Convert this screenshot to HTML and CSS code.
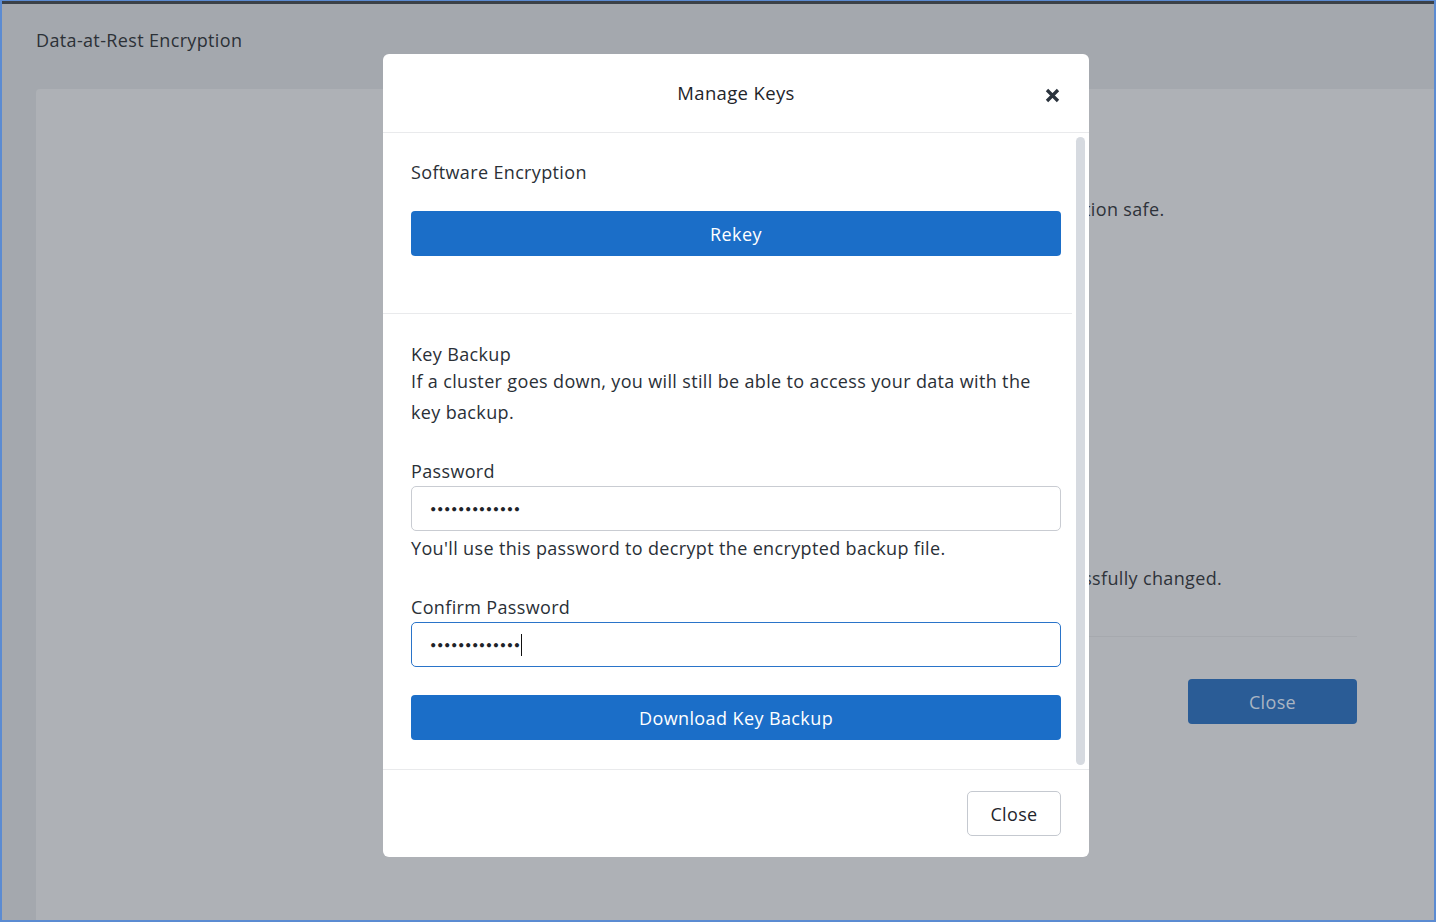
FILE: index.html
```html
<!DOCTYPE html>
<html>
<head>
  <title>Data-at-Rest Encryption</title>
  <link rel="stylesheet" href="styles.css">
</head>
<body>
  <div class="frame">
    <div class="top-line"></div>

    <!-- Page behind the dialog -->
    <div class="page">
      <h1 class="page-title">Data-at-Rest Encryption</h1>
      <div class="panel">
        <div class="panel-body">
          <p class="panel-text first">Rekeying replaces the current encryption key to keep your information safe.</p>
          <p class="panel-text second">The encryption key of this cluster has been successfully changed.</p>
          <div class="panel-footer">
            <button class="page-close">Close</button>
          </div>
        </div>
      </div>
    </div>

    <!-- Manage Keys dialog -->
    <div class="modal">
      <div class="modal-header">
        <span class="modal-title">Manage Keys</span>
        <a href="#" class="modal-x">
          <svg width="15" height="15" viewBox="0 0 15 15">
            <path d="M2 2 L13 13 M13 2 L2 13" stroke="#2b333d" stroke-width="3.3" fill="none"/>
          </svg>
        </a>
      </div>

      <div class="modal-body">
        <div class="modal-scroll">
          <div class="section">
            <div class="section-title">Software Encryption</div>
            <button class="button">Rekey</button>
          </div>

          <div class="section backup">
            <div class="section-title">Key Backup</div>
            <div class="description">If a cluster goes down, you will still be able to access your data with the key backup.</div>

            <label class="label">Password</label>
            <div class="field"><span class="dots">•••••••••••••</span></div>
            <div class="help">You'll use this password to decrypt the encrypted backup file.</div>

            <label class="label confirm">Confirm Password</label>
            <div class="field focused"><span class="dots">•••••••••••••</span><span class="caret"></span></div>

            <button class="button download">Download Key Backup</button>
          </div>
        </div>
        <div class="scrollbar"><div class="thumb"></div></div>
      </div>

      <div class="modal-footer">
        <button class="close-btn">Close</button>
      </div>
    </div>
  </div>
</body>
</html>
```

FILE: styles.css
```css
body {
  margin: 0;
  padding: 0;
  font-family: "Open Sans", Lato, sans-serif;
  letter-spacing: 0.35px;
  color: #2a3037;
}

.frame {
  position: relative;
  width: 1436px;
  height: 922px;
  box-sizing: border-box;
  border: 2px solid #5b8bd2;
  border-top-width: 1px;
  background-color: #a4a8ae;
  overflow: hidden;
  display: flex;
  flex-direction: column;
}

.top-line {
  height: 3px;
  background-color: #3b4148;
}

.page {
  flex: 1;
  display: flex;
  flex-direction: column;
}

.page-title {
  margin: 0;
  padding: 24px 0 0 34px;
  height: 85px;
  box-sizing: border-box;
  font-size: 18px;
  font-weight: normal;
  line-height: 24px;
  color: #2c3137;
}

.panel {
  flex: 1;
  margin-left: 34px;
  background-color: #aeb1b6;
  border-top-left-radius: 4px;
}

.panel-body {
  margin-left: 424px;
  width: 897px;
  padding-top: 108px;
}

.panel-text {
  margin: 0;
  font-size: 18px;
  line-height: 24px;
  color: #2e333a;
  white-space: nowrap;
}

.panel-text.first {
  padding-left: 43px;
}

.panel-text.second {
  margin-top: 345px;
  padding-left: 196px;
}

.panel-footer {
  margin-top: 46px;
  border-top: 1px solid #a6a9ae;
  padding-top: 42px;
  display: flex;
  justify-content: flex-end;
}

.page-close {
  width: 169px;
  height: 45px;
  border: none;
  border-radius: 4px;
  background-color: #2a5c96;
  color: #a9b5c3;
  font-family: "Open Sans", sans-serif;
  font-size: 18px;
  letter-spacing: 0.35px;
}

/* dialog */
.modal {
  position: absolute;
  left: 381px;
  top: 53px;
  width: 706px;
  height: 803px;
  background-color: #fff;
  border-radius: 6px;
  display: flex;
  flex-direction: column;
}

.modal-header {
  position: relative;
  height: 77px;
  padding-bottom: 1px;
  border-bottom: 1px solid #e9eaec;
  display: flex;
  justify-content: center;
  align-items: center;
}

.modal-title {
  font-size: 18.5px;
  color: #1f252b;
}

.modal-x {
  position: absolute;
  right: 29px;
  top: 34px;
  line-height: 0;
}

.modal-body {
  height: 636px;
  display: flex;
  border-bottom: 1px solid #e9eaec;
}

.modal-scroll {
  flex: 1;
}

.scrollbar {
  width: 17px;
  padding: 4px 0;
  box-sizing: border-box;
}

.thumb {
  width: 9px;
  height: 100%;
  margin-left: 4px;
  background-color: #d6dae0;
  border-radius: 5px;
}

.section {
  padding: 27px 11px 57px 28px;
}

.section.backup {
  border-top: 1px solid #e9eaec;
  padding-top: 28px;
  padding-bottom: 28px;
}

.section-title {
  font-size: 18px;
  line-height: 24px;
  margin-bottom: 27px;
}

.section.backup .section-title {
  margin-bottom: 0;
}

.description {
  font-size: 18px;
  line-height: 31px;
  margin-bottom: 31px;
}

.button {
  display: block;
  width: 100%;
  height: 45px;
  border: none;
  border-radius: 4px;
  background-color: #1b6ec8;
  color: #fff;
  font-family: "Open Sans", sans-serif;
  font-size: 18px;
  letter-spacing: 0.4px;
  cursor: pointer;
}

.label {
  display: block;
  font-size: 18px;
  line-height: 24px;
  margin-bottom: 3px;
}

.label.confirm {
  margin-top: 35px;
}

.field {
  height: 45px;
  box-sizing: border-box;
  border: 1px solid #c9ccd2;
  border-radius: 5px;
  padding: 0 18px;
  display: flex;
  align-items: center;
}

.field.focused {
  border: 1.5px solid #2a74c9;
}

.dots {
  font-family: Lato, sans-serif;
  font-size: 11px;
  letter-spacing: 0.6px;
  color: #1e2329;
}

.caret {
  width: 1px;
  height: 22px;
  background-color: #111;
}

.help {
  font-size: 18px;
  line-height: 24px;
  margin-top: 5px;
}

.button.download {
  margin-top: 28px;
}

.modal-footer {
  flex: 1;
  display: flex;
  justify-content: flex-end;
  align-items: center;
  padding-right: 28px;
}

.close-btn {
  width: 94px;
  height: 45px;
  background-color: #fff;
  border: 1px solid #c5c9d0;
  border-radius: 5px;
  font-family: "Open Sans", sans-serif;
  font-size: 18px;
  letter-spacing: 0.35px;
  color: #1f252b;
  cursor: pointer;
}
```
